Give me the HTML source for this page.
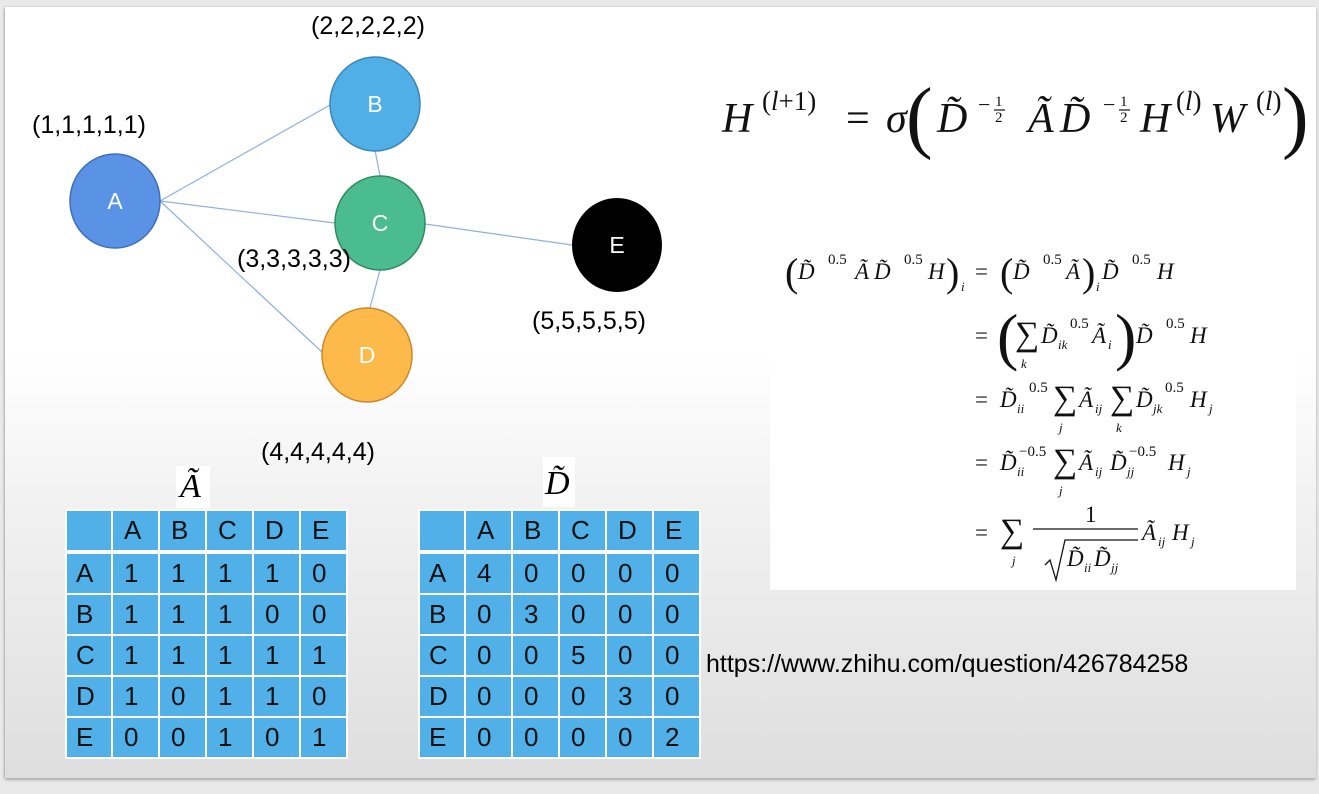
<!DOCTYPE html>
<html><head><meta charset="utf-8"><style>
body{margin:0;width:1319px;height:794px;background:#e9e9e9;position:relative;overflow:hidden;font-family:"Liberation Sans",sans-serif}
#slide{position:absolute;left:5px;top:7px;width:1311px;height:771px;background:linear-gradient(#fff 0%,#fff 45%,#f1f1f1 65%,#dedede 100%);box-shadow:0 2px 3px rgba(0,0,0,.25),-1px 0 2px rgba(0,0,0,.15)}
.lbl{position:absolute;font-size:25px;color:#000}
table.m{position:absolute;top:509px;border-collapse:separate;border-spacing:2px;background:#fff}
table.m td{background:#50b0e7;width:45px;height:39px;padding:0 0 0 11px;font-size:26px;color:#111;text-align:left;box-sizing:border-box}
table.m tr.sp td{height:0;padding:0;background:#fff}
table.m td:first-child{width:44px;padding-left:9px}
.ser{font-family:"Liberation Serif",serif;font-style:italic}
</style></head><body>
<div id="slide"></div>
<svg width="1319" height="794" style="position:absolute;left:0;top:0">
<g stroke="#8db0e0" stroke-width="1.2">
<line x1="160" y1="201" x2="330" y2="105"/>
<line x1="160" y1="201" x2="335" y2="223"/>
<line x1="160" y1="201" x2="322" y2="352"/>
<line x1="375" y1="150" x2="380" y2="176"/>
<line x1="380" y1="270" x2="370" y2="308"/>
<line x1="425" y1="224" x2="572" y2="245"/>
</g>
<ellipse cx="115" cy="201" rx="45" ry="47" fill="#5a92e6" stroke="#3f6fb8" stroke-width="1.5"/>
<ellipse cx="375" cy="104" rx="45" ry="47" fill="#50afe6" stroke="#3d85b5" stroke-width="1.5"/>
<ellipse cx="380" cy="223" rx="45" ry="47" fill="#4bbc90" stroke="#2f8a62" stroke-width="1.5"/>
<ellipse cx="367" cy="355" rx="45" ry="47" fill="#feb94b" stroke="#c88a2c" stroke-width="1.5"/>
<ellipse cx="617" cy="245" rx="45" ry="47" fill="#000"/>
<g fill="#fff" font-family="Liberation Sans" font-size="23" text-anchor="middle">
<text x="115" y="209">A</text><text x="375" y="112">B</text><text x="380" y="231">C</text><text x="367" y="363">D</text><text x="617" y="253">E</text>
</g>
</svg>
<div class="lbl" style="left:32px;top:111px">(1,1,1,1,1)</div>
<div class="lbl" style="left:311px;top:12px">(2,2,2,2,2)</div>
<div class="lbl" style="left:237px;top:245px">(3,3,3,3,3)</div>
<div class="lbl" style="left:261px;top:438px">(4,4,4,4,4)</div>
<div class="lbl" style="left:532px;top:307px">(5,5,5,5,5)</div>
<div class="lbl" style="left:706px;top:650px;font-size:25px">https://www.zhihu.com/question/426784258</div>

<div style="position:absolute;left:176px;top:466px;width:34px;height:42px;background:#fff"></div>
<div class="ser" style="position:absolute;left:180px;top:468px;font-size:34px">Ã</div>
<div style="position:absolute;left:543px;top:457px;width:32px;height:50px;background:#fff"></div>
<div class="ser" style="position:absolute;left:545px;top:465px;font-size:34px">D̃</div>

<table class="m" style="left:65px">
<tr><td></td><td>A</td><td>B</td><td>C</td><td>D</td><td>E</td></tr>
<tr class="sp"><td></td><td></td><td></td><td></td><td></td><td></td></tr>
<tr><td>A</td><td>1</td><td>1</td><td>1</td><td>1</td><td>0</td></tr>
<tr><td>B</td><td>1</td><td>1</td><td>1</td><td>0</td><td>0</td></tr>
<tr><td>C</td><td>1</td><td>1</td><td>1</td><td>1</td><td>1</td></tr>
<tr><td>D</td><td>1</td><td>0</td><td>1</td><td>1</td><td>0</td></tr>
<tr><td>E</td><td>0</td><td>0</td><td>1</td><td>0</td><td>1</td></tr>
</table>
<table class="m" style="left:418px">
<tr><td></td><td>A</td><td>B</td><td>C</td><td>D</td><td>E</td></tr>
<tr class="sp"><td></td><td></td><td></td><td></td><td></td><td></td></tr>
<tr><td>A</td><td>4</td><td>0</td><td>0</td><td>0</td><td>0</td></tr>
<tr><td>B</td><td>0</td><td>3</td><td>0</td><td>0</td><td>0</td></tr>
<tr><td>C</td><td>0</td><td>0</td><td>5</td><td>0</td><td>0</td></tr>
<tr><td>D</td><td>0</td><td>0</td><td>0</td><td>3</td><td>0</td></tr>
<tr><td>E</td><td>0</td><td>0</td><td>0</td><td>0</td><td>2</td></tr>
</table>

<div style="position:absolute;left:770px;top:231px;width:526px;height:359px;background:#fff"></div>

<svg width="1319" height="794" style="position:absolute;left:0;top:0" font-family="Liberation Serif" fill="#111">
<g font-size="42">
<text x="722" y="132" font-style="italic">H</text>
<text x="762" y="110" font-size="27">(<tspan font-style="italic">l</tspan>+1)</text>
<text x="846" y="132">=</text>
<text x="886" y="132" font-style="italic">σ</text>
<text x="906" y="143" font-size="80">(</text>
<text x="937" y="132" font-style="italic">D̃</text>
<text x="978" y="112" font-size="22">−</text>
<text x="995" y="106" font-size="15">1</text><line x1="994" y1="110" x2="1005" y2="110" stroke="#111" stroke-width="1.2"/><text x="995" y="122" font-size="15">2</text>
<text x="1028" y="132" font-style="italic">Ã</text>
<text x="1060" y="132" font-style="italic">D̃</text>
<text x="1103" y="112" font-size="22">−</text>
<text x="1120" y="106" font-size="15">1</text><line x1="1119" y1="110" x2="1130" y2="110" stroke="#111" stroke-width="1.2"/><text x="1120" y="122" font-size="15">2</text>
<text x="1140" y="132" font-style="italic">H</text>
<text x="1176" y="110" font-size="27">(<tspan font-style="italic">l</tspan>)</text>
<text x="1210" y="132" font-style="italic">W</text>
<text x="1256" y="110" font-size="27">(<tspan font-style="italic">l</tspan>)</text>
<text x="1282" y="143" font-size="80">)</text>
</g>
<g font-size="23">
<text x="785" y="286" font-size="40">(</text>
<text x="798" y="279" font-style="italic">D̃</text><text x="828" y="264" font-size="15">0.5</text>
<text x="855" y="279" font-style="italic">Ã</text><text x="874" y="279" font-style="italic">D̃</text><text x="904" y="264" font-size="15">0.5</text>
<text x="928" y="279" font-style="italic">H</text>
<text x="946" y="286" font-size="40">)</text><text x="961" y="291" font-size="13" font-style="italic">i</text>
<text x="975" y="279">=</text>
<text x="1000" y="286" font-size="40">(</text>
<text x="1013" y="279" font-style="italic">D̃</text><text x="1043" y="264" font-size="15">0.5</text>
<text x="1066" y="279" font-style="italic">Ã</text>
<text x="1082" y="286" font-size="40">)</text><text x="1096" y="291" font-size="13" font-style="italic">i</text>
<text x="1102" y="279" font-style="italic">D̃</text><text x="1132" y="264" font-size="15">0.5</text><text x="1157" y="279" font-style="italic">H</text>

<text x="975" y="343">=</text>
<text x="997" y="358" font-size="64">(</text>
<text x="1015" y="345" font-size="34">∑</text><text x="1021" y="368" font-size="13" font-style="italic">k</text>
<text x="1041" y="343" font-style="italic">D̃</text><text x="1058" y="349" font-size="13" font-style="italic">ik</text><text x="1070" y="328" font-size="15">0.5</text>
<text x="1092" y="343" font-style="italic">Ã</text><text x="1108" y="349" font-size="13" font-style="italic">i</text>
<text x="1115" y="358" font-size="64">)</text>
<text x="1136" y="343" font-style="italic">D̃</text><text x="1166" y="328" font-size="15">0.5</text><text x="1190" y="343" font-style="italic">H</text>

<text x="975" y="407">=</text>
<text x="1000" y="407" font-style="italic">D̃</text><text x="1017" y="413" font-size="13" font-style="italic">ii</text><text x="1029" y="392" font-size="15">0.5</text>
<text x="1053" y="409" font-size="34">∑</text><text x="1059" y="432" font-size="13" font-style="italic">j</text>
<text x="1079" y="407" font-style="italic">Ã</text><text x="1095" y="413" font-size="13" font-style="italic">ij</text>
<text x="1110" y="409" font-size="34">∑</text><text x="1116" y="432" font-size="13" font-style="italic">k</text>
<text x="1136" y="407" font-style="italic">D̃</text><text x="1153" y="413" font-size="13" font-style="italic">jk</text><text x="1165" y="392" font-size="15">0.5</text>
<text x="1190" y="407" font-style="italic">H</text><text x="1209" y="413" font-size="13" font-style="italic">j</text>

<text x="975" y="470">=</text>
<text x="1000" y="470" font-style="italic">D̃</text><text x="1017" y="476" font-size="13" font-style="italic">ii</text><text x="1019" y="456" font-size="15">−0.5</text>
<text x="1053" y="472" font-size="34">∑</text><text x="1059" y="495" font-size="13" font-style="italic">j</text>
<text x="1079" y="470" font-style="italic">Ã</text><text x="1095" y="476" font-size="13" font-style="italic">ij</text>
<text x="1110" y="470" font-style="italic">D̃</text><text x="1127" y="476" font-size="13" font-style="italic">jj</text><text x="1129" y="456" font-size="15">−0.5</text>
<text x="1168" y="470" font-style="italic">H</text><text x="1187" y="476" font-size="13" font-style="italic">j</text>

<text x="975" y="540">=</text>
<text x="1000" y="542" font-size="34">∑</text><text x="1012" y="565" font-size="13" font-style="italic">j</text>
<text x="1085" y="522">1</text>
<line x1="1033" y1="529" x2="1138" y2="529" stroke="#111" stroke-width="1.3"/>
<path d="M1045 565 L1050 560 L1056 580 L1065 540 L1138 540" fill="none" stroke="#111" stroke-width="1.3"/>
<text x="1067" y="566" font-style="italic">D̃</text><text x="1084" y="572" font-size="13" font-style="italic">ii</text>
<text x="1094" y="566" font-style="italic">D̃</text><text x="1111" y="572" font-size="13" font-style="italic">jj</text>
<text x="1142" y="540" font-style="italic">Ã</text><text x="1158" y="546" font-size="13" font-style="italic">ij</text>
<text x="1172" y="540" font-style="italic">H</text><text x="1191" y="546" font-size="13" font-style="italic">j</text>
</g>
</svg>
</body></html>
